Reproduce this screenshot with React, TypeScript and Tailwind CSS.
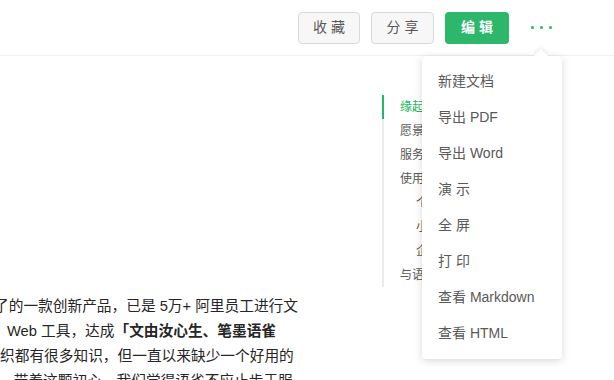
const menuItems = [
  '新建文档',
  '导出 PDF',
  '导出 Word',
  '演 示',
  '全 屏',
  '打 印',
  '查看 Markdown',
  '查看 HTML',
];

const toc = [
  { label: '缘起', sub: false, active: true },
  { label: '愿景', sub: false },
  { label: '服务', sub: false },
  { label: '使用', sub: false },
  { label: '个', sub: true },
  { label: '小', sub: true },
  { label: '企', sub: true },
  { label: '与语', sub: false },
];

const font = { fontFamily: '"Liberation Sans", "Noto Sans CJK SC", sans-serif' };

function Header() {
  return (
    <div className="h-[56px] border-b border-[#f0f0f0] flex items-center justify-end pr-[62px] gap-[11px]">
      <button className="h-[32px] w-[62px] rounded-[4px] border border-[#d9d9d9] bg-[#f7f7f7] text-[14px] tracking-[4px] text-[#595959] pl-[4px]">
        收藏
      </button>
      <button className="h-[32px] w-[63px] rounded-[4px] border border-[#d9d9d9] bg-[#f7f7f7] text-[14px] tracking-[4px] text-[#595959] pl-[4px]">
        分享
      </button>
      <button className="h-[32px] w-[64px] rounded-[4px] bg-[#2cb76a] text-[14px] font-bold tracking-[4px] text-white pl-[4px]">
        编辑
      </button>
      <div className="ml-[11px] flex gap-[6px] items-center">
        <span className="w-[3px] h-[3px] rounded-full bg-[#25b864]" />
        <span className="w-[3px] h-[3px] rounded-full bg-[#25b864]" />
        <span className="w-[3px] h-[3px] rounded-full bg-[#25b864]" />
      </div>
    </div>
  );
}

function Menu() {
  return (
    <div className="absolute left-[422px] top-[56px] w-[140px] rounded-[4px] bg-white shadow-[0_2px_8px_rgba(0,0,0,0.15)] pt-[7px] pb-[8px]">
      <div className="absolute -top-[5px] left-[114px] w-[10px] h-[10px] rotate-45 bg-white shadow-[-2px_-2px_4px_rgba(0,0,0,0.06)]" />
      {menuItems.map((item) => (
        <div key={item} className="relative h-[36px] flex items-center pl-[16px] text-[14px] text-[#595959]">
          {item}
        </div>
      ))}
    </div>
  );
}

export default function App() {
  return (
    <div className="relative w-[614px] h-[380px] overflow-hidden bg-white" style={font}>
      <Header />
      <div className="flex">
        <div className="w-[382px] pt-[238px] overflow-hidden text-[14.7px] leading-[25px] text-[#262626]">
          <div className="whitespace-nowrap ml-[-6px]">了的一款创新产品，已是 5万+ 阿里员工进行文</div>
          <div className="whitespace-nowrap ml-[7px]">
            {' '}Web 工具，达成<span className="font-bold">「文由汝心生、笔墨语雀</span>
          </div>
          <div className="whitespace-nowrap ml-[0px]">织都有很多知识，但一直以来缺少一个好用的</div>
          <div className="whitespace-nowrap ml-[-1px]">。带着这颗初心，我们觉得语雀不应止步于服</div>
        </div>
        <div className="mt-[39px] h-[192px] w-[40px] border-l-[2px] border-[#ebebeb] relative">
          {toc.map((t) => (
            <div
              key={t.label}
              className={`relative h-[24px] flex items-center text-[12px] whitespace-nowrap ${t.sub ? 'pl-[32px]' : 'pl-[16px]'} ${t.active ? 'text-[#25b864]' : 'text-[#595959]'}`}
            >
              {t.active && <span className="absolute left-[-2px] top-0 h-[24px] w-[2px] bg-[#25b864]" />}
              {t.label}
            </div>
          ))}
        </div>
      </div>
      <Menu />
    </div>
  );
}
